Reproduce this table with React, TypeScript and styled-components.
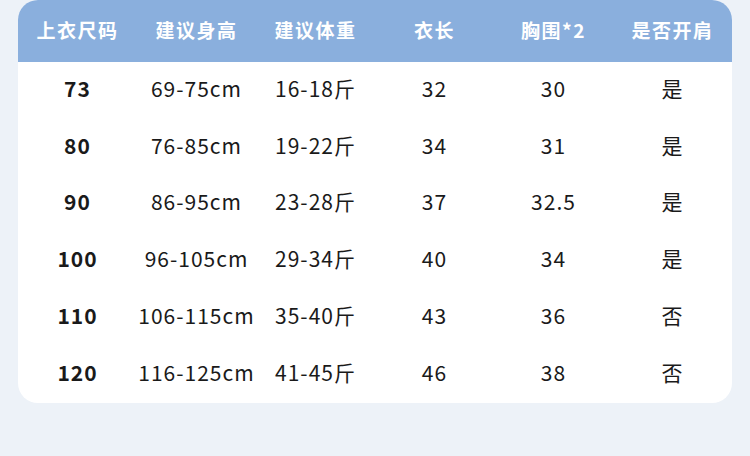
import React from 'react'
import styled, { createGlobalStyle } from 'styled-components'

const GlobalStyle = createGlobalStyle`
    html, body {
        margin: 0;
        padding: 0;
        background: #edf2f8;
    }
    body {
        font-family: "Noto Sans CJK SC", "Noto Sans", sans-serif;
    }
`

const Page = styled.div`
    width: 750px;
    height: 456px;
    padding: 0 18px;
    box-sizing: border-box;
`

const Card = styled.div`
    width: 714px;
    height: 403px;
    background: #ffffff;
    border-radius: 20px;
    overflow: hidden;
    display: flex;
    flex-direction: column;
`

const Row = styled.div<{ $head?: boolean }>`
    display: grid;
    grid-template-columns: repeat(6, 1fr);
    align-items: center;
    height: ${(p) => (p.$head ? '62px' : '56.8px')};
    background: ${(p) => (p.$head ? '#8aafdd' : 'transparent')};
`

const HeadCell = styled.div`
    text-align: center;
    color: #ffffff;
    font-size: 19px;
    font-weight: 700;
    letter-spacing: 1.5px;
    padding-bottom: 3px;
`

const Cell = styled.div<{ $strong?: boolean }>`
    text-align: center;
    color: #1a1a1a;
    font-size: 21px;
    font-weight: ${(p) => (p.$strong ? 700 : 400)};
    letter-spacing: 1px;
    padding-bottom: 5px;
`

const headers = ['上衣尺码', '建议身高', '建议体重', '衣长', '胸围*2', '是否开肩']

const rows = [
    ['73', '69-75cm', '16-18斤', '32', '30', '是'],
    ['80', '76-85cm', '19-22斤', '34', '31', '是'],
    ['90', '86-95cm', '23-28斤', '37', '32.5', '是'],
    ['100', '96-105cm', '29-34斤', '40', '34', '是'],
    ['110', '106-115cm', '35-40斤', '43', '36', '否'],
    ['120', '116-125cm', '41-45斤', '46', '38', '否'],
]

export default function App(): React.ReactElement {
    return (
        <Page>
            <GlobalStyle />
            <Card>
                <Row $head>
                    {headers.map((h) => (
                        <HeadCell key={h}>{h}</HeadCell>
                    ))}
                </Row>
                {rows.map((r) => (
                    <Row key={r[0]}>
                        {r.map((v, i) => (
                            <Cell key={i} $strong={i === 0}>
                                {v}
                            </Cell>
                        ))}
                    </Row>
                ))}
            </Card>
        </Page>
    )
}
